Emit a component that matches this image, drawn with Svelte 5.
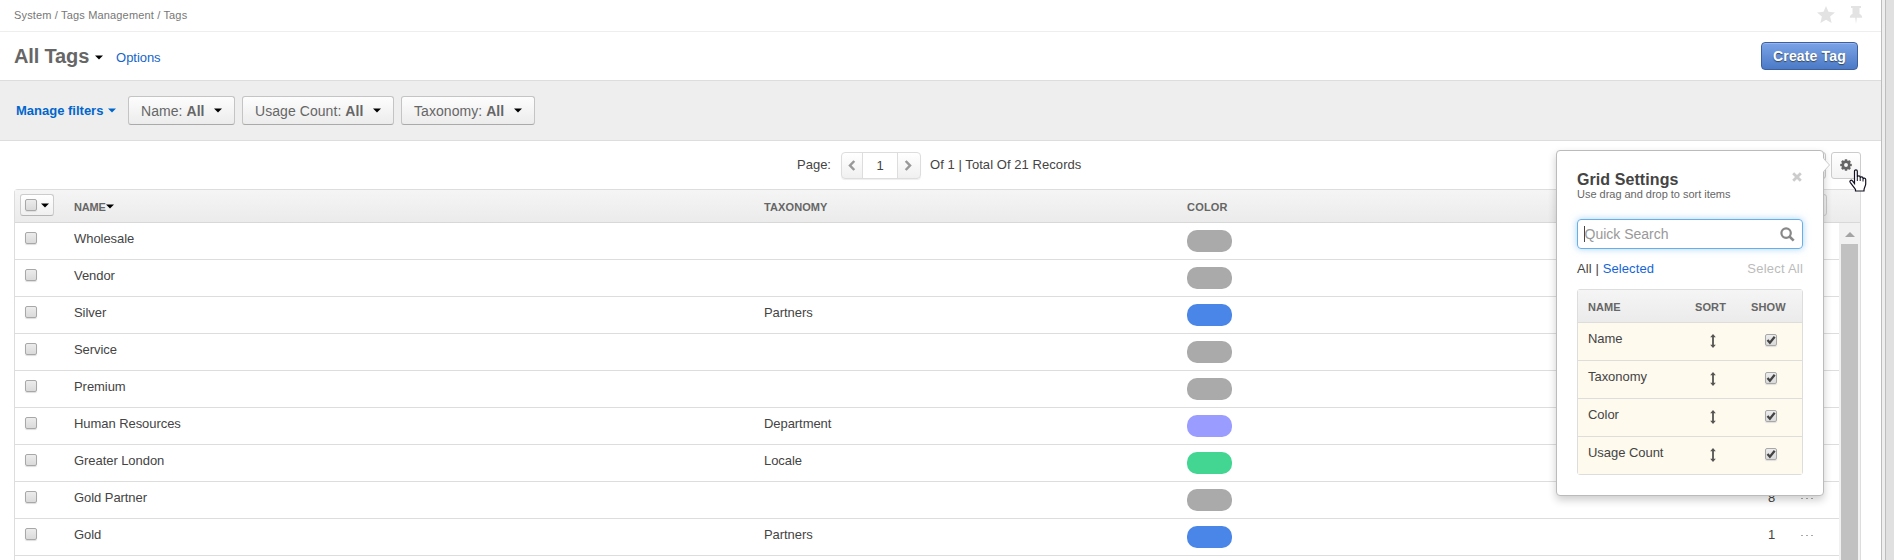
<script>
  const GREY = '#aaaaaa', BLUE = '#4986e7', VIOLET = '#9a9cff', GREEN = '#42d692';
  const filters = [
    { label: 'Name', width: 107 },
    { label: 'Usage Count', width: 152 },
    { label: 'Taxonomy', width: 134 }
  ];
  const rows = [
    { name: 'Wholesale', tax: '', color: GREY, count: '' },
    { name: 'Vendor', tax: '', color: GREY, count: '' },
    { name: 'Silver', tax: 'Partners', color: BLUE, count: '' },
    { name: 'Service', tax: '', color: GREY, count: '' },
    { name: 'Premium', tax: '', color: GREY, count: '' },
    { name: 'Human Resources', tax: 'Department', color: VIOLET, count: '' },
    { name: 'Greater London', tax: 'Locale', color: GREEN, count: '' },
    { name: 'Gold Partner', tax: '', color: GREY, count: 8 },
    { name: 'Gold', tax: 'Partners', color: BLUE, count: 1 },
    { name: '', tax: '', color: '', count: '' }
  ];
  const columns = ['Name', 'Taxonomy', 'Color', 'Usage Count'];
</script>

{#snippet caret()}
  <svg class="caret" width="8" height="5" viewBox="0 0 8 5"><path d="M0 0.5h8L4 4.500z" fill="currentColor" /></svg>
{/snippet}

<div class="page">
  <div class="main">
    <nav class="crumbs">
      <span>System / Tags Management / Tags</span>
      <div class="marks">
        <svg width="18" height="17" viewBox="0 0 18 17"><path d="M9 0l2.5 5.7 6.5.7-4.9 4.2 1.5 6.4L9 13.7 3.4 17l1.5-6.4L0 6.4l6.5-.7z" fill="#e3e3e3" /></svg>
        <svg width="14" height="18" viewBox="0 0 14 18"><path d="M2 0h10v2h-1.500v6C12.300 8.600 13.200 10 13.200 11.700H7.800L7 18l-.8-6.300H.8C.8 10 1.700 8.600 3.500 8V2H2z" fill="#e3e3e3" /></svg>
      </div>
    </nav>

    <header class="title-bar">
      <h1>All Tags</h1>
      {@render caret()}
      <span class="options">Options</span>
      <button class="create">Create Tag</button>
    </header>

    <section class="filters">
      <span class="manage">Manage filters {@render caret()}</span>
      {#each filters as f}
        <button class="filter" style="width:{f.width}px"><span>{f.label}: <b>All</b></span>{@render caret()}</button>
      {/each}
    </section>

    <section class="toolbar">
      <span class="plabel">Page:</span>
      <div class="pager">
        <span class="step"><svg width="8" height="11" viewBox="0 0 8 11"><path d="M6.300 1L2 5.500 6.300 10" fill="none" stroke="#999" stroke-width="2.500" /></svg></span>
        <span class="num">1</span>
        <span class="step"><svg width="8" height="11" viewBox="0 0 8 11"><path d="M1.700 1L6 5.500 1.700 10" fill="none" stroke="#999" stroke-width="2.500" /></svg></span>
      </div>
      <span class="total">Of 1 | Total Of 21 Records</span>
      <div class="tools">
        <span class="tool"></span>
        <span class="tool">
          <svg width="12" height="12" viewBox="0 0 13 13"><g fill="#666"><circle cx="6.500" cy="6.500" r="4.800" />{#each [0, 45, 90, 135] as a}<rect x="5.100" y="0.200" width="2.800" height="12.600" rx=".5" transform="rotate({a} 6.500 6.500)" />{/each}</g><circle cx="6.500" cy="6.500" r="2.100" fill="#f8f8f8" /></svg>
        </span>
      </div>
    </section>

    <section class="grid">
      <div class="row head">
        <span class="mass"><i class="box"></i>{@render caret()}</span>
        <span class="sorted">NAME{@render caret()}</span>
        <span class="c-tax">TAXONOMY</span>
        <span class="c-color">COLOR</span>
        <span></span>
        <span class="head-tool"></span>
      </div>
      <div class="body">
        <div class="rows">
          {#each rows as r}
            <div class="row">
              <span>{#if r.name}<i class="box"></i>{/if}</span>
              <span>{r.name}</span>
              <span>{r.tax}</span>
              <span>{#if r.color}<i class="pill" style="background:{r.color}"></i>{/if}</span>
              <span class="count">{r.count}</span>
              <span class="dots">{#if r.name}<i></i><i></i><i></i>{/if}</span>
            </div>
          {/each}
        </div>
        <div class="scroll">
          <svg width="10" height="5" viewBox="0 0 10 5"><path d="M0 5L5 0l5 5z" fill="#a3a3a3" /></svg>
          <div class="thumb"></div>
        </div>
      </div>
    </section>
  </div>
  <div class="gutter"></div>

  <aside class="popup">
    <svg class="arrow" width="8" height="14" viewBox="0 0 8 14"><path d="M0 0L6.500 7 0 14z" fill="#fff" /><path d="M.5 .5L6.500 7l-6 6.500" fill="none" stroke="#ccc" /></svg>
    <div class="ptitle">
      <h2>Grid Settings</h2>
      <svg width="10" height="10" viewBox="0 0 10 10"><path d="M1.200 1.200l7.600 7.600M8.800 1.200L1.200 8.800" stroke="#ccc" stroke-width="2.800" /></svg>
    </div>
    <p>Use drag and drop to sort items</p>
    <div class="search">
      <i class="cursor-bar"></i><span>Quick Search</span>
      <svg width="15" height="15" viewBox="0 0 15 15"><circle cx="6.100" cy="6.100" r="4.700" fill="none" stroke="#888" stroke-width="2.200" /><path d="M9.500 9.500l4.200 4.200" stroke="#888" stroke-width="2.600" /></svg>
    </div>
    <div class="links"><span>All | <span class="link">Selected</span></span><span class="selall">Select All</span></div>
    <div class="inner">
      <div class="irow ihead"><span>NAME</span><span>SORT</span><span>SHOW</span></div>
      {#each columns as c}
        <div class="irow">
          <span>{c}</span>
          <span class="sort"><svg width="6" height="14" viewBox="0 0 6 14"><path d="M3 0l2.800 3.300H3.900v7.400h1.900L3 14 .2 10.700h1.900V3.300H.2z" fill="#555" /></svg></span>
          <span class="show"><i class="box"><svg width="10" height="10" viewBox="0 0 10 10"><path d="M1.500 5l2.400 2.700L8.700 1.800" fill="none" stroke="#444" stroke-width="2.300" /></svg></i></span>
        </div>
      {/each}
    </div>
  </aside>

  <svg class="hand" width="18" height="23" viewBox="0 0 18 23">
    <path d="M5.500 14.500V2.200C5.500.5 8.300.5 8.300 2.200V8c0-1.500 2.900-1.400 2.900.3v.6c0-1.400 2.800-1.300 2.800.4v.7c.3-1.300 2.700-1.100 2.700.6V15c0 2-1.700 3.500-1.700 6v1H6.500v-1.500L1.200 13.300c-1-1.600 1-3 2.300-1.500z" fill="#fff" stroke="#112" stroke-width="1.200" />
    <path d="M8.300 8v4M11.200 9v3M14 10v2.500" stroke="#112" fill="none" />
  </svg>
</div>

<style>
  :global(body) { margin: 0; }
  * { box-sizing: border-box; }
  .page { position: relative; display: flex; width: 1894px; height: 560px; overflow: hidden; font: 13px/18px "Liberation Sans", Arial, sans-serif; color: #444; background: #fff; }
  .main { width: 1881px; flex: none; display: flex; flex-direction: column; }
  .gutter { width: 13px; background: linear-gradient(90deg, #bdbdbd 1px, #eee 1px 4px, #bdbdbd 4px 5px, #e0e0e0 5px); }
  svg { display: block; flex: none; }
  h1, h2, p { margin: 0; }
  button { font-family: inherit; padding: 0; }
  .crumbs { height: 32px; border-bottom: 1px solid #eee; padding: 0 18px 0 14px; display: flex; align-items: center; justify-content: space-between; font-size: 11px; color: #777; flex: none; }
  .crumbs span { letter-spacing: .16px; margin-top: -1px; }
  .marks { display: flex; gap: 14px; margin-top: -2px; }
  .title-bar { height: 49px; border-bottom: 1px solid #ddd; padding: 0 23px 0 14px; display: flex; align-items: center; flex: none; color: #000; }
  h1 { font-size: 20px; line-height: 24px; color: #666; letter-spacing: -.15px; margin: -1px 6px 0 0; white-space: nowrap; }
  .title-bar > .caret { margin-top: 3px; }
  .options { color: #1565c8; margin: 3px 0 0 13px; letter-spacing: -.05px; }
  .create { margin-left: auto; width: 97px; height: 28px; border: 1px solid #3d5f9c; border-radius: 4px; background: linear-gradient(#7ba3e6, #4c7ac6); box-shadow: inset 0 1px #95b5ec; color: #fff; font-weight: bold; font-size: 14px; letter-spacing: .15px; text-shadow: 0 1px 1px #345; }
  .filters { height: 60px; flex: none; background: #eee; border-bottom: 1px solid #ddd; display: flex; align-items: center; gap: 7px; padding-left: 16px; }
  .manage { display: flex; align-items: center; width: 105px; font-weight: bold; color: #0066cc; gap: 5px; white-space: nowrap; }
  .filter { height: 29px; border: 1px solid #c4c4c4; border-bottom-color: #aaa; border-radius: 3px; background: linear-gradient(#fdfdfd, #ececec); display: flex; align-items: center; justify-content: space-between; padding: 0 12px 0 12px; font-size: 14px; letter-spacing: .06px; color: #000; white-space: nowrap; }
  .filter span { color: #666; }
  .toolbar { height: 48px; flex: none; display: flex; align-items: center; padding: 0 20px 0 797px; }
  .plabel { width: 44px; }
  .pager { display: flex; width: 80px; height: 27px; border: 1px solid #ddd; border-radius: 4px; background: linear-gradient(#fff, #f0f0f0); box-shadow: 0 1px 1px #eee; }
  .step { width: 20px; display: flex; align-items: center; justify-content: center; }
  .step:last-child { width: 22px; padding-right: 2px; }
  .num { flex: 1; background: #fff; border: solid #ddd; border-width: 0 1px; text-align: center; line-height: 26px; }
  .total { margin-left: 9px; letter-spacing: .06px; }
  .tools { margin-left: auto; display: flex; gap: 5px; }
  .tool { width: 30px; height: 27px; border: 1px solid #ccc; border-radius: 3px; background: linear-gradient(#fff, #f3f3f3); display: flex; align-items: center; justify-content: center; }
  .grid { margin-left: 14px; width: 1847px; height: 380px; border: 1px solid #ddd; border-bottom: 0; border-radius: 4px 4px 0 0; flex: none; }
  .row { display: grid; grid-template-columns: 59px 690px 423px 581px 18px 1fr; height: 37px; border-bottom: 1px solid #ddd; padding-top: 7px; letter-spacing: -.06px; }
  .head { height: 33px; border-color: #d8d8d8; background: linear-gradient(#f5f5f5, #ebebeb); font-size: 11px; font-weight: bold; color: #666; align-items: center; line-height: 14px; padding-top: 1px; letter-spacing: 0; }
  .mass { width: 34px; height: 22px; margin: -3px 0 0 5px; border: 1px solid #ccc; border-bottom-color: #b5b5b5; border-radius: 3px; background: linear-gradient(#fff, #f0f0f0); display: flex; align-items: center; padding-left: 4px; gap: 4px; color: #000; }
  .mass .box { margin: 0; }
  .sorted { display: flex; align-items: center; letter-spacing: -.15px; }
  .sorted .caret { color: #000; }
  .c-tax { letter-spacing: .1px; }
  .c-color { letter-spacing: .2px; }
  .head-tool { height: 22px; width: 34px; margin: -3px 0 0 7px; border: 1px solid #ccc; border-radius: 3px; }
  .body { display: flex; height: 346px; overflow: hidden; }
  .rows { flex: 1; }
  .box { display: block; width: 12px; height: 12px; margin: 2px 0 0 10px; border: 1px solid #a8a8a8; border-radius: 2px; background: linear-gradient(#ececec, #dadada); box-shadow: 0 1px 1px #ddd; }
  .pill { display: block; width: 45px; height: 22px; border-radius: 10px; }
  .dots { display: flex; gap: 3px; padding: 9px 0 0 15px; }
  .dots i { width: 2px; height: 1px; background: #aaa; }
  .scroll { width: 21px; background: #f1f1f1; padding: 9px 2px 0 2px; display: flex; flex-direction: column; align-items: center; gap: 7px; }
  .thumb { width: 17px; flex: 1; background: #c1c1c1; }

  .popup { position: absolute; left: 1556px; top: 150px; width: 268px; height: 346px; border: 1px solid #bbb; border-radius: 4px; background: #fff; box-shadow: 0 4px 8px rgba(0, 0, 0, .2); padding: 20px 20px 0; }
  .arrow { position: absolute; left: 266px; top: 7px; }
  .ptitle { display: flex; justify-content: space-between; height: 16px; }
  .ptitle svg { margin: 1px 1px 0 0; }
  h2 { font-size: 16px; line-height: 18px; letter-spacing: .08px; }
  p { font-size: 11px; line-height: 14px; color: #666; letter-spacing: -.02px; white-space: nowrap; }
  .search { margin-top: 18px; height: 30px; border: 1px solid #66afe9; border-radius: 4px; box-shadow: 0 0 7px rgba(102, 175, 233, .55); display: flex; align-items: center; padding: 0 7px 0 6px; font-size: 14px; color: #999; }
  .search span { flex: 1; margin-left: -.5px; }
  .cursor-bar { width: 1px; height: 16px; background: #444; }
  .links { margin-top: 11px; display: flex; justify-content: space-between; letter-spacing: .1px; }
  .link { color: #1565d8; }
  .selall { color: #bbb; letter-spacing: .22px; }
  .inner { margin-top: 11px; border: 1px solid #ddd; border-radius: 3px; }
  .irow { display: grid; grid-template-columns: 107px 56px 1fr; height: 38px; padding: 7px 0 0 10px; background: #fefaee; border-bottom: 1px solid #ddd; letter-spacing: -.04px; }
  .irow:last-child { border-bottom: 0; height: 37px; }
  .ihead { height: 33px; background: linear-gradient(#f5f5f5, #ebebeb); font-size: 11px; font-weight: bold; color: #666; line-height: 14px; padding-top: 10px; letter-spacing: .1px; }
  .sort svg { margin: 4px 0 0 15px; }
  .show .box { margin: 4px 0 0 14px; }
  .hand { position: absolute; left: 1849px; top: 169px; }
</style>
